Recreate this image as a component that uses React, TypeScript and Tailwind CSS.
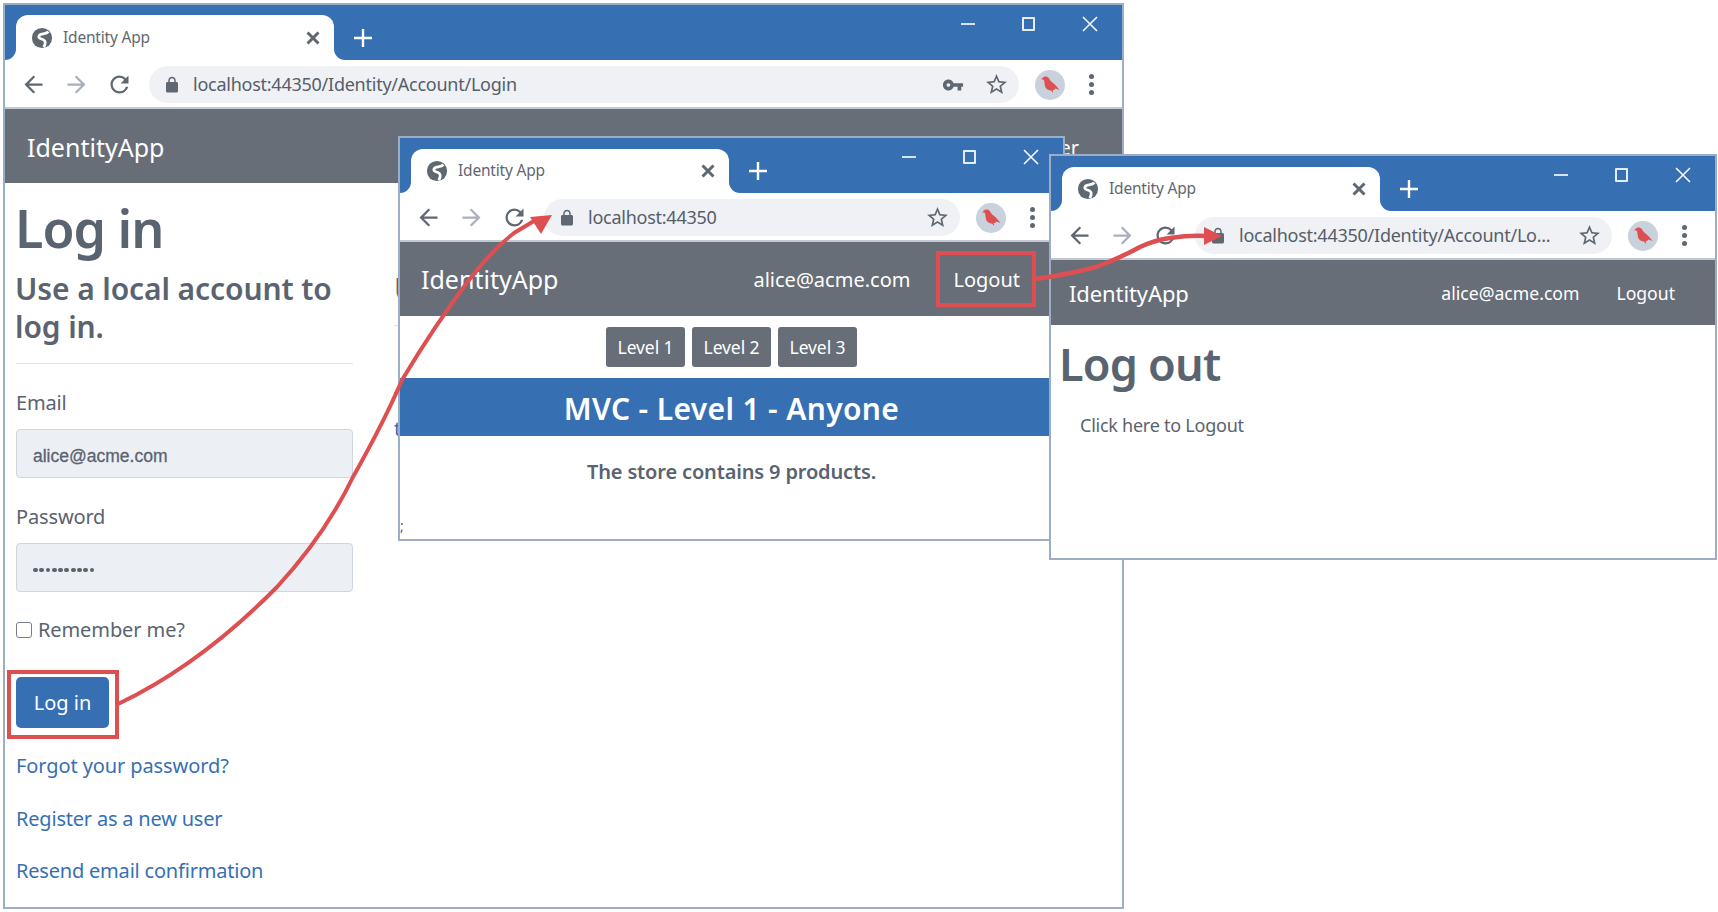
import type { ReactNode } from 'react'

const ICONS = {
    back: 'M20 11H7.83l5.59-5.59L12 4l-8 8 8 8 1.41-1.41L7.83 13H20v-2z',
    reload: 'M17.65 6.35A7.958 7.958 0 0012 4c-4.42 0-7.99 3.58-7.99 8s3.57 8 7.99 8c3.73 0 6.84-2.55 7.73-6h-2.08A5.99 5.99 0 0112 18c-3.31 0-6-2.69-6-6s2.69-6 6-6c1.66 0 3.14.69 4.22 1.78L13 11h7V4l-2.35 2.35z',
    lock: 'M18 8h-1V6c0-2.76-2.24-5-5-5S7 3.24 7 6v2H6c-1.1 0-2 .9-2 2v10c0 1.1.9 2 2 2h12c1.1 0 2-.9 2-2V10c0-1.1-.9-2-2-2zM9 6c0-1.66 1.34-3 3-3s3 1.34 3 3v2H9V6z',
    star: 'M22 9.24l-7.19-.62L12 2 9.19 8.63 2 9.24l5.46 4.73L5.82 21 12 17.27 18.18 21l-1.63-7.03L22 9.24zM12 15.4l-3.76 2.27 1-4.28-3.32-2.88 4.38-.38L12 6.1l1.71 4.04 4.38.38-3.32 2.88 1 4.28L12 15.4z',
    key: 'M12.65 10C11.83 7.67 9.61 6 7 6c-3.31 0-6 2.69-6 6s2.69 6 6 6c2.61 0 4.83-1.67 5.65-4H17v4h4v-4h2v-4H12.65zM7 14c-1.1 0-2-.9-2-2s.9-2 2-2 2 .9 2 2-.9 2-2 2z',
}

function Icon({ d, className }: { d: string; className: string }) {
    return (
        <svg viewBox="0 0 24 24" fill="currentColor" className={className}>
            <path d={d} />
        </svg>
    )
}

function Globe() {
    return (
        <svg viewBox="0 0 24 24" className="w-[22px] h-[22px] shrink-0">
            <circle cx="12" cy="12" r="11" fill="#5f6771" />
            <path d="M19 5C16 9 9 6 8.500 10.500C8.300 14 15 12 15.500 16.500C15.700 18 15 20 14 22" fill="none" stroke="#fff" strokeWidth="3" />
        </svg>
    )
}

function Bird() {
    return (
        <div className="w-[30px] h-[30px] rounded-full bg-[#c9d1dc] flex items-center justify-center shrink-0">
            <svg viewBox="0 0 24 24" className="w-[24px] h-[24px]" fill="#dd4f51">
                <path d="M5 4.500c1.200-1.500 4-1.500 5.500.2 1.200 1.300 1.500 2.800 3 4 1.800 1.500 3.800 2.800 5.200 4.800l2.800 3.500-4-1.400c-.7 1-1.800 1.600-3 1.800l.8 1.900h-1.100l-1-1.800c-3.200-.2-6-2-6.400-5.300C6.500 10 6.400 8 5.800 6.800L3.200 6.300z" />
            </svg>
        </div>
    )
}

function TabBar({ pad }: { pad: string }) {
    return (
        <div className="h-[55px] bg-[#3670b3] flex items-start shrink-0">
            <div className={`relative ml-[11px] w-[318px] h-full ${pad}`}>
                <div className="h-full bg-white rounded-t-[12px] flex items-center pl-[15px] pr-[10px]">
                    <Globe />
                    <span className="ml-[10px] text-[15.5px] text-[#5f6771] font-['Noto_Sans',sans-serif] tracking-[-0.2px]">Identity App</span>
                    <svg viewBox="0 0 24 24" className="ml-auto w-[22px] h-[22px] text-[#5f6771]" fill="none" stroke="currentColor" strokeWidth="3.2">
                        <path d="M6 6l12 12M18 6L6 18" />
                    </svg>
                </div>
                {/* tab corner flares */}
                <span className="absolute -left-[11px] bottom-0 w-[11px] h-[11px] bg-white">
                    <span className="block w-full h-full bg-[#3670b3] rounded-br-[11px]" />
                </span>
                <span className="absolute -right-[11px] bottom-0 w-[11px] h-[11px] bg-white">
                    <span className="block w-full h-full bg-[#3670b3] rounded-bl-[11px]" />
                </span>
            </div>
            <div className={`ml-[12px] w-[34px] h-full flex items-center justify-center ${pad}`}>
                <svg viewBox="0 0 24 24" className="w-[24px] h-[24px] text-white" fill="none" stroke="currentColor" strokeWidth="2.4">
                    <path d="M12 3v18M3 12h18" />
                </svg>
            </div>
            <div className="ml-auto pr-[2px] flex text-white">
                <div className="w-[61px] h-[38px] flex items-center justify-center">
                    <span className="block w-[14px] h-[2px] bg-[#d7e2f0]" />
                </div>
                <div className="w-[61px] h-[38px] flex items-center justify-center">
                    <span className="block w-[13px] h-[14px] border-2 border-[#e4ecf6] rounded-[1px]" />
                </div>
                <div className="w-[61px] h-[38px] flex items-center justify-center">
                    <svg viewBox="0 0 16 16" className="w-[16px] h-[16px]" fill="none" stroke="currentColor" strokeWidth="1.500">
                        <path d="M1 1l14 14M15 1L1 15" />
                    </svg>
                </div>
            </div>
        </div>
    )
}

function Toolbar({ url, showKey }: { url: string; showKey?: boolean }) {
    return (
        <div className="h-[49px] pt-[2px] bg-white border-b-2 border-[#c3c9d2] flex items-center pl-[7px] shrink-0">
            <div className="w-[43px] flex justify-center"><Icon d={ICONS.back} className="w-[27px] h-[27px] text-[#5f6771]" /></div>
            <div className="w-[43px] flex justify-center"><Icon d={ICONS.back} className="w-[27px] h-[27px] text-[#a9b0ba] rotate-180" /></div>
            <div className="w-[43px] flex justify-center"><Icon d={ICONS.reload} className="w-[27px] h-[27px] text-[#5f6771]" /></div>
            <div className="ml-[8px] flex-1 min-w-0 h-[37px] rounded-full bg-[#eff1f5] flex items-center pl-[14px] pr-[10px]">
                <Icon d={ICONS.lock} className="w-[18px] h-[18px] text-[#5f6771] shrink-0" />
                <span className="ml-[12px] text-[18px] text-[#565e69] font-['Noto_Sans',sans-serif] tracking-[-0.25px] whitespace-nowrap">{url}</span>
                {showKey && <Icon d={ICONS.key} className="ml-auto w-[22px] h-[22px] text-[#5f6771]" />}
                <Icon d={ICONS.star} className={`${showKey ? 'ml-[20px]' : 'ml-auto'} w-[25px] h-[25px] text-[#5f6771]`} />
            </div>
            <div className="w-[103px] flex items-center shrink-0">
                <div className="ml-[16px]"><Bird /></div>
                <div className="ml-[24px] flex flex-col gap-[3px]">
                    <span className="w-[5px] h-[5px] rounded-full bg-[#5f6771]" />
                    <span className="w-[5px] h-[5px] rounded-full bg-[#5f6771]" />
                    <span className="w-[5px] h-[5px] rounded-full bg-[#5f6771]" />
                </div>
            </div>
        </div>
    )
}

function Chrome({ className, pad, url, showKey, children }: { className: string; pad: string; url: string; showKey?: boolean; children: ReactNode }) {
    return (
        <div className={`absolute bg-white border-2 border-[#9cadc6] flex flex-col overflow-hidden ${className}`}>
            <TabBar pad={pad} />
            <Toolbar url={url} showKey={showKey} />
            {children}
        </div>
    )
}

function LevelButton({ label }: { label: string }) {
    return <button className="w-[79px] h-[40px] bg-[#676e78] rounded-[3px] text-white text-[17.5px] tracking-[-0.1px]">{label}</button>
}

function Arrows() {
    return (
        <svg className="absolute left-0 top-0 w-[1718px] h-[912px] pointer-events-none" viewBox="0 0 1718 912" fill="none">
            <path d="M118 704Q200 665 277 587Q325 535 353 477Q385 420 402 380Q435 325 469 280Q490 252 514 233L534 221" stroke="#dd4f51" strokeWidth="4" />
            <polygon points="552,215 530,217 541,234" fill="#dd4f51" />
            <path d="M1036 279Q1070 274 1096 267Q1120 258 1140 247Q1155 240 1170 238Q1190 235 1206 236" stroke="#dd4f51" strokeWidth="4.500" />
            <polygon points="1222,236 1204,227 1204,245" fill="#dd4f51" />
        </svg>
    )
}

export default function App() {
    return (
        <div className="relative w-[1718px] h-[912px] bg-white overflow-hidden font-['Noto_Sans',sans-serif] text-[#5a6370]">
            {/* login window */}
            <Chrome className="left-[3px] top-[3px] w-[1121px] h-[906px]" pad="pt-[10px]" url="localhost:44350/Identity/Account/Login" showKey>
                <div className="h-[74px] pt-[3px] bg-[#676e78] flex items-center justify-between pl-[22px] pr-[43px] shrink-0 text-white">
                    <span className="text-[25px]">IdentityApp</span>
                    <span className="text-[20px]">Register</span>
                </div>
                <div className="flex pl-[11px]">
                    <div className="w-[337px] shrink-0">
                        <h1 className="mt-[16px] -ml-[1px] text-[52px] leading-[58px] font-semibold tracking-[-1px]">Log in</h1>
                        <h2 className="mt-[13px] -ml-[1px] text-[30px] leading-[38px] font-semibold tracking-[-0.1px]">Use a local account to log in.</h2>
                        <div className="mt-[17px] h-px bg-[#dfe2e7]" />
                        <div className="mt-[25px] text-[20px] leading-[28px] tracking-[-0.15px]">Email</div>
                        <div className="mt-[12px] h-[49px] pt-[6px] bg-[#eceff4] border border-[#cfd6e0] rounded-[4px] flex items-center pl-[16px] text-[17.5px] font-['Liberation_Sans',sans-serif] [-webkit-text-stroke:0.3px]">alice@acme.com</div>
                        <div className="mt-[25px] text-[20px] leading-[28px] tracking-[-0.15px]">Password</div>
                        <div className="mt-[12px] h-[49px] pt-[5px] bg-[#eceff4] border border-[#cfd6e0] rounded-[4px] flex items-center gap-[1.500px] pl-[16px]">
                            {Array.from({ length: 10 }).map((_, i) => (
                                <span key={i} className="w-[4.800px] h-[4.800px] rounded-full bg-[#5a6370]" />
                            ))}
                        </div>
                        <div className="mt-[24px] h-[28px] flex items-center">
                            <span className="w-[16px] h-[16px] border border-[#767d87] rounded-[3px]" />
                            <span className="ml-[6px] text-[20px] tracking-[-0.1px]">Remember me?</span>
                        </div>
                        <div className="relative mt-[33px] w-[93px] h-[51px]">
                            <button className="w-full h-full bg-[#3670b3] rounded-[5px] text-white text-[20px]">Log in</button>
                            <span className="absolute -left-[9px] -top-[7px] w-[112px] h-[69px] border-4 border-[#dd4f51]" />
                        </div>
                        <div className="mt-[24px] text-[20px] leading-[28px] text-[#3670b3] tracking-[-0.1px]">Forgot your password?</div>
                        <div className="mt-[25px] text-[20px] leading-[28px] text-[#3670b3] tracking-[-0.2px]">Register as a new user</div>
                        <div className="mt-[24px] text-[20px] leading-[28px] text-[#3670b3] tracking-[-0.2px]">Resend email confirmation</div>
                    </div>
                    {/* right column, almost entirely behind the next window */}
                    <div className="ml-[41px] w-[600px] shrink-0">
                        <h2 className="mt-[87px] text-[30px] leading-[38px] font-semibold">Use another service to log in.</h2>
                        <div className="mt-[17px] h-px bg-[#dfe2e7]" />
                        <p className="mt-[58px] text-[20px] leading-[30px]">
                            There are no external authentication services configured. <span className="text-[#3670b3]">See this article</span>
                        </p>
                    </div>
                </div>
            </Chrome>

            {/* store window */}
            <Chrome className="left-[398px] top-[136px] w-[667px] h-[405px]" pad="pt-[11px]" url="localhost:44350">
                <div className="relative h-[74px] pt-[2px] bg-[#676e78] flex items-center pl-[21px] shrink-0 text-white">
                    <span className="text-[25px]">IdentityApp</span>
                    <span className="ml-auto text-[20px]">alice@acme.com</span>
                    <span className="ml-[43px] mr-[43px] text-[20px]">Logout</span>
                    <span className="absolute left-[536px] top-[9px] w-[100px] h-[56px] border-4 border-[#dd4f51]" />
                </div>
                <div className="relative flex-1">
                    <div className="mt-[11px] flex justify-center gap-[7px]">
                        <LevelButton label="Level 1" />
                        <LevelButton label="Level 2" />
                        <LevelButton label="Level 3" />
                    </div>
                    <div className="mt-[11px] h-[58px] pt-[2px] bg-[#3670b3] flex items-center justify-center text-white text-[30px] font-semibold tracking-[0.35px]">MVC - Level 1 - Anyone</div>
                    <div className="mt-[20px] text-center text-[20px] leading-[32px] font-semibold tracking-[-0.15px]">The store contains 9 products.</div>
                    <span className="absolute left-0 bottom-[6px] text-[14px] leading-none">;</span>
                </div>
            </Chrome>

            {/* logout window */}
            <Chrome className="left-[1049px] top-[154px] w-[668px] h-[406px]" pad="pt-[11px]" url="localhost:44350/Identity/Account/Lo...">
                <div className="h-[65px] pt-[2px] bg-[#676e78] flex items-center pl-[18px] shrink-0 text-white">
                    <span className="text-[22px] tracking-[-0.1px]">IdentityApp</span>
                    <span className="ml-auto text-[17.6px]">alice@acme.com</span>
                    <span className="ml-[37px] mr-[40px] text-[17.6px]">Logout</span>
                </div>
                <div className="pl-[8px]">
                    <h1 className="mt-[10px] text-[45px] leading-[58px] font-semibold tracking-[-0.8px]">Log out</h1>
                    <p className="mt-[18px] ml-[21px] text-[18px] leading-[28px] tracking-[-0.25px]">Click here to Logout</p>
                </div>
            </Chrome>

            <Arrows />
        </div>
    )
}
